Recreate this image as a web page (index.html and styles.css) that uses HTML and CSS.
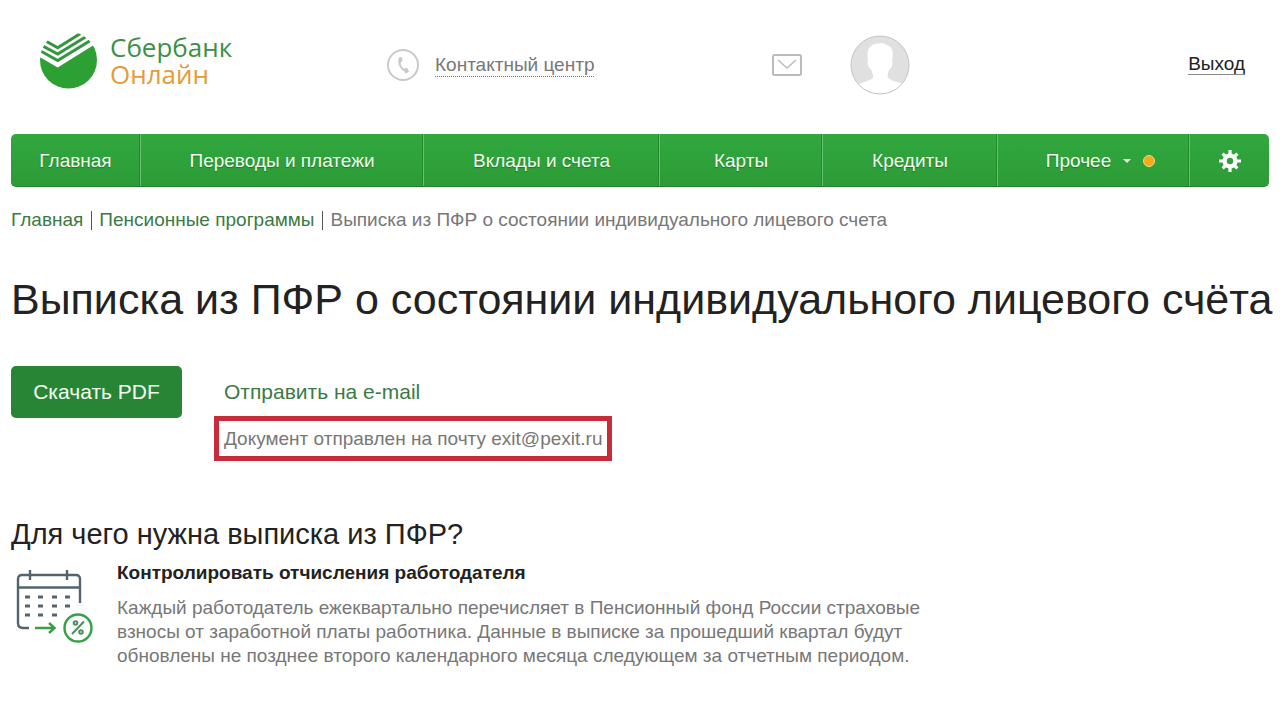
FILE: index.html
```html
<!DOCTYPE html>
<html lang="ru">
<head>
<meta charset="utf-8">
<meta name="viewport" content="width=device-width, initial-scale=1">
<title>Сбербанк Онлайн</title>
<link rel="stylesheet" href="styles.css">
</head>
<body>
<header class="header">
  <a class="logo" href="#">
    <svg class="logo-mark" width="58" height="58" viewBox="0 0 58 58" aria-hidden="true">
      <defs><clipPath id="disc"><circle cx="28.500" cy="28" r="28.500"/></clipPath></defs>
      <g clip-path="url(#disc)">
        <path d="M-2 24L17.700 35.500L60 9V58H-2Z" fill="#2da033"/>
        <g fill="none" stroke="#35963f" stroke-width="3">
          <path d="M4 8L17.700 15.800L46 -2"/>
          <path d="M0 12.500L17.700 22L52 1"/>
          <path d="M-2 17.500L17.700 28.500L58 4"/>
        </g>
      </g>
    </svg>
    <span class="logo-text"><span>Сбербанк</span><span class="logo-accent">Онлайн</span></span>
  </a>
  <a class="contact" href="#">
    <svg width="32" height="32" viewBox="0 0 32 32" fill="none" aria-hidden="true">
      <circle cx="16" cy="16" r="15" stroke="#c9c9c9" stroke-width="2"/>
      <path d="M13 10C11 15 14 20 19 22" stroke="#c9c9c9" stroke-width="2"/>
      <path d="M12 9L14.500 8.500L15 12L12.500 13.500ZM17.500 20L20 19.500L21.500 22.500L18.500 24Z" fill="#c9c9c9" stroke="#c9c9c9" stroke-linejoin="round"/>
    </svg>
    <span class="contact-text">Контактный центр</span>
  </a>
  <a class="mail" href="#" aria-label="Сообщения">
    <svg width="30" height="22" viewBox="0 0 30 22" fill="none" stroke="#bbb" aria-hidden="true">
      <rect x="1" y="1" width="28" height="20" rx="1.500" stroke-width="2"/>
      <path d="M6 6L15 14L24 6" stroke-width="1.400"/>
    </svg>
  </a>
  <a class="avatar" href="#" aria-label="Профиль">
    <svg width="60" height="60" viewBox="0 0 60 60" aria-hidden="true">
      <defs><clipPath id="face"><circle cx="30" cy="30" r="29"/></clipPath></defs>
      <circle cx="30" cy="30" r="29" fill="#e0e0e0"/>
      <path clip-path="url(#face)" d="M2 60V52C8 48 18 47 23 43C24 41 22 38 21 34C18 33 17 28 18 26C17 20 17 14 21 11C24 8 28 9 31 8C34 8 35 9 37 10C42 11 44 17 42 26C43 29 42 33 39 35C38 38 37 41 38 43C43 47 50 47 58 51V60Z" fill="#fff"/>
      <circle cx="30" cy="30" r="29" fill="none" stroke="#c4c4c4"/>
    </svg>
  </a>
  <a class="exit" href="#">Выход</a>
</header>

<main class="page">
  <nav class="nav">
    <a href="#">Главная</a>
    <a href="#">Переводы и платежи</a>
    <a href="#">Вклады и счета</a>
    <a href="#">Карты</a>
    <a href="#">Кредиты</a>
    <a class="nav-more" href="#">Прочее<span class="caret"></span><span class="dot"></span></a>
    <a href="#" aria-label="Настройки">
      <svg width="22" height="22" viewBox="-11 -11 22 22" aria-hidden="true">
        <g stroke="#fff" stroke-width="3.200">
          <path d="M0 -11V-6M0 11V6M-11 0H-6M11 0H6"/>
          <path d="M-7.400 -7.400L-4 -4M7.400 7.400L4 4M-7.400 7.400L-4 4M7.400 -7.400L4 -4"/>
        </g>
        <circle r="5.400" fill="none" stroke="#fff" stroke-width="4.400"/>
      </svg>
    </a>
  </nav>

  <nav class="crumbs" aria-label="Навигация">
    <a href="#">Главная</a>
    <a href="#">Пенсионные программы</a>
    <span>Выписка из ПФР о состоянии индивидуального лицевого счета</span>
  </nav>

  <h1 class="title">Выписка из ПФР о состоянии индивидуального лицевого счёта</h1>

  <section class="actions">
    <button class="download" type="button">Скачать PDF</button>
    <div class="send">
      <a class="send-link" href="#">Отправить на e-mail</a>
      <p class="notice">Документ отправлен на почту exit@pexit.ru</p>
    </div>
  </section>

  <h2 class="subtitle">Для чего нужна выписка из ПФР?</h2>
  <section class="reason">
    <svg class="reason-icon" width="78" height="76" viewBox="0 0 78 76" fill="none" stroke-width="2.400" aria-hidden="true">
      <g stroke="#53646e">
        <path d="M64 31V7Q64 3 60 3H6Q2 3 2 7V51Q2 56 7 56H13M2 15.500H64"/>
        <path d="M14 -2V8M51 -2V8"/>
        <path stroke-width="2.800" d="M9 25H14M22 25H27M36 25H41M49 25H54M9 34H14M22 34H27M36 34H41M49 34H54M9 43H14M22 43H27M36 43H41"/>
      </g>
      <g stroke="#36a044">
        <path d="M19 56H39M33 51L38.500 56L33 61"/>
        <circle cx="62" cy="56" r="13.500"/>
      </g>
      <g stroke="#4f8d60" stroke-width="2">
        <path d="M68 49.500L56 62"/>
        <circle cx="59.500" cy="51" r="1.800"/>
        <circle cx="65" cy="60" r="1.800"/>
      </g>
    </svg>
    <div class="reason-body">
      <h3 class="reason-title">Контролировать отчисления работодателя</h3>
      <p class="reason-text">Каждый работодатель ежеквартально перечисляет в Пенсионный фонд России страховые взносы от заработной платы работника. Данные в выписке за прошедший квартал будут обновлены не позднее второго календарного месяца следующем за отчетным периодом.</p>
    </div>
  </section>
</main>
</body>
</html>
```
FILE: styles.css
```css
* { box-sizing: border-box; }
body {
  margin: 0;
  background: #fff;
  color: #222;
  font: 19px/24px "Liberation Sans", Arial, sans-serif;
}
a { color: inherit; text-decoration: none; }
h1, h2, h3, p { margin: 0; font-weight: 400; }
svg { display: block; flex: none; }

.header {
  display: grid;
  grid-template-columns: 347fr 385fr 78fr 200fr 195fr;
  align-items: center;
  padding: 31px 43px 31px 40px;
  min-height: 134px;
}
.logo { display: flex; align-items: center; gap: 12px; padding-bottom: 12px; }
.logo-text {
  display: grid;
  font: 26px/27px "Open Sans", "Noto Sans", sans-serif;
  color: #3b9147;
}
.logo-accent { color: #e39b3c; }
.contact { display: flex; align-items: center; gap: 16px; padding-bottom: 4px; color: #777; }
.contact-text { line-height: 22px; border-bottom: 1px dotted #777; }
.mail { padding-bottom: 4px; }
.avatar { padding-bottom: 4px; }
.exit { justify-self: end; margin-bottom: 6px; line-height: 20px; border-bottom: 1px solid #888; }

.page { padding: 0 19px 40px 11px; }
.nav {
  display: grid;
  grid-template-columns: 129fr 283fr 236fr 163fr 175fr 192fr 80fr;
  height: 53px;
  border-radius: 5px;
  border-bottom: 1px solid #217f2c;
  background: linear-gradient(#31a83e, #2d9b37);
  color: #f2fff0;
  text-shadow: 0 1px 1px #1c7527;
}
.nav a { display: flex; align-items: center; justify-content: center; padding-top: 2px; }
.nav a + a { border-left: 1px solid #67bd6e; box-shadow: -1px 0 #278a31; }
.nav .nav-more { padding-left: 14px; }
.caret { margin: 0 12px; border: 4px solid transparent; border-top-color: #e5f8df; border-bottom: 0; }
.dot { width: 12px; height: 12px; border: 1px solid #e5df80; border-radius: 50%; background: #f9a91c; }

.crumbs { display: flex; padding-top: 21px; color: #777; }
.crumbs a { color: #3b7a44; }
.crumbs > * + * { position: relative; margin-left: 8px; padding-left: 8px; }
.crumbs > * + *::before { content: ""; position: absolute; left: 0; top: 3px; height: 19px; border-left: 1px solid #555; }
.title { margin: 41px -19px 0 0; font-size: 43px; line-height: 52px; }

.actions { display: flex; gap: 32px; margin-top: 41px; }
.download {
  width: 171px;
  height: 52px;
  border: 0;
  border-radius: 5px;
  background: #298536;
  color: #f4fff2;
  font: inherit;
  font-size: 21px;
}
.send { padding-top: 14px; }
.send-link { margin-left: 10px; color: #3b7a44; font-size: 21px; }
.notice { margin-top: 11px; padding: 5px; border: 5px solid #c72c3a; color: #777; line-height: 25px; }

.subtitle { margin-top: 55px; font-size: 29px; line-height: 36px; }
.reason { display: flex; gap: 23px; margin-top: 9px; }
.reason-icon { margin: 11px 0 0 5px; overflow: visible; }
.reason-body { max-width: 812px; }
.reason-title { font-weight: 700; font-size: 19px; line-height: 24px; }
.reason-text { margin-top: 11px; color: #777; }
```
